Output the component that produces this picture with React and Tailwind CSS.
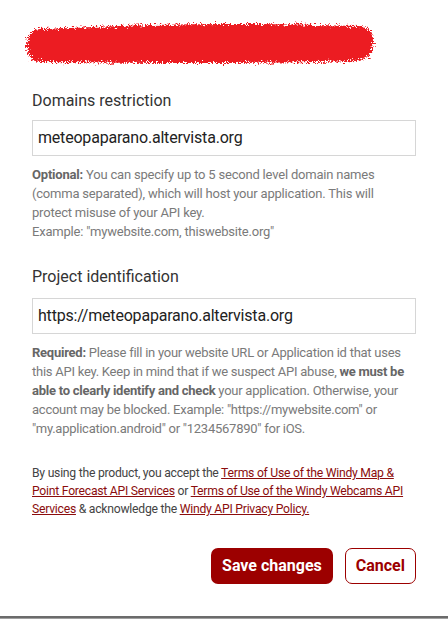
import React from "react";

function Scribble() {
  return (
    <svg width="448" height="56" viewBox="0 0 448 56" className="block">
      <defs>
        <filter id="spray" x="-5%" y="-30%" width="110%" height="160%">
          <feTurbulence type="fractalNoise" baseFrequency="1.6" numOctaves="2" seed="3" result="noise" />
          <feDisplacementMap in="SourceGraphic" in2="noise" scale="10" xChannelSelector="R" yChannelSelector="G" result="disp" />
          <feTurbulence type="fractalNoise" baseFrequency="2.2" numOctaves="1" seed="7" result="noise2" />
          <feComponentTransfer in="noise2" result="mask">
            <feFuncA type="discrete" tableValues="0 1 1 1 1 1 1 1 1 1" />
          </feComponentTransfer>
          <feComposite in="disp" in2="mask" operator="in" />
        </filter>
      </defs>
      <path
        d="M40 9 C 120 6, 200 1, 360 6 Q 374 8, 373 23 Q 372 40, 356 41 C 250 44, 150 43, 40 42 Q 27 41, 27 26 Q 27 10, 40 9 Z"
        fill="#ec1c24"
        filter="url(#spray)"
      />
    </svg>
  );
}

export default function App() {
  return (
    <div className="w-[448px] h-[619px] bg-white overflow-hidden flex flex-col" style={{ fontFamily: "Roboto, 'Liberation Sans', sans-serif" }}>
      <div className="pt-[20px] shrink-0">
        <Scribble />
      </div>
      <div className="px-8 pt-[13px] flex flex-col">
        <div className="text-[16px] leading-[24px] text-[#333]">Domains restriction</div>
        <div className="mt-[7px] h-[36px] border border-[#d6d6d6] flex items-center px-[5px] text-[16px] text-[#222] tracking-[-0.2px]">
          meteopaparano.altervista.org
        </div>
        <p className="mt-[9px] text-[13px] leading-[19px] text-[#7a7a7a] tracking-[-0.2px]">
          <b className="font-bold text-[#666]">Optional:</b> You can specify up to 5 second level domain names (comma separated), which will host your application. This will protect misuse of your API key.
          <br />
          Example: "mywebsite.com, thiswebsite.org"
        </p>

        <div className="mt-[24px] text-[16px] leading-[24px] text-[#333]">Project identification</div>
        <div className="mt-[9px] h-[36px] border border-[#d6d6d6] flex items-center px-[5px] text-[16px] text-[#222] tracking-[-0.2px]">
          https://meteopaparano.altervista.org
        </div>
        <p className="mt-[9px] text-[13px] leading-[19px] text-[#7a7a7a] tracking-[-0.25px]">
          <b className="font-bold text-[#666]">Required:</b> Please fill in your website URL or Application id that uses this API key. Keep in mind that if we suspect API abuse, <b className="font-bold text-[#666]">we must be able to clearly identify and check</b> your application. Otherwise, your account may be blocked. Example: "https://mywebsite.com" or "my.application.android" or "1234567890" for iOS.
        </p>

        <p className="mt-[26px] text-[12.2px] leading-[18px] text-[#444] tracking-[-0.25px]">
          By using the product, you accept the{" "}
          <a className="text-[#8b0d0d] underline">Terms of Use of the Windy Map &amp; Point Forecast API Services</a> or{" "}
          <a className="text-[#8b0d0d] underline">Terms of Use of the Windy Webcams API Services</a> &amp; acknowledge the{" "}
          <a className="text-[#8b0d0d] underline">Windy API Privacy Policy.</a>
        </p>

        <div className="mt-[30px] flex justify-end gap-[12px]">
          <button className="h-[36px] px-[11px] rounded-[7px] bg-[#9c0000] text-white text-[16px] font-bold">
            Save changes
          </button>
          <button className="h-[36px] px-[10px] rounded-[7px] border border-[#9c0000] bg-white text-[#9c0000] text-[16px] font-bold">
            Cancel
          </button>
        </div>
      </div>
      <div className="flex-1" />
      <div className="h-[2px] bg-[#6b6b6b] shrink-0" />
      <div className="h-[1px] bg-[#a0a0a0] shrink-0" />
    </div>
  );
}
